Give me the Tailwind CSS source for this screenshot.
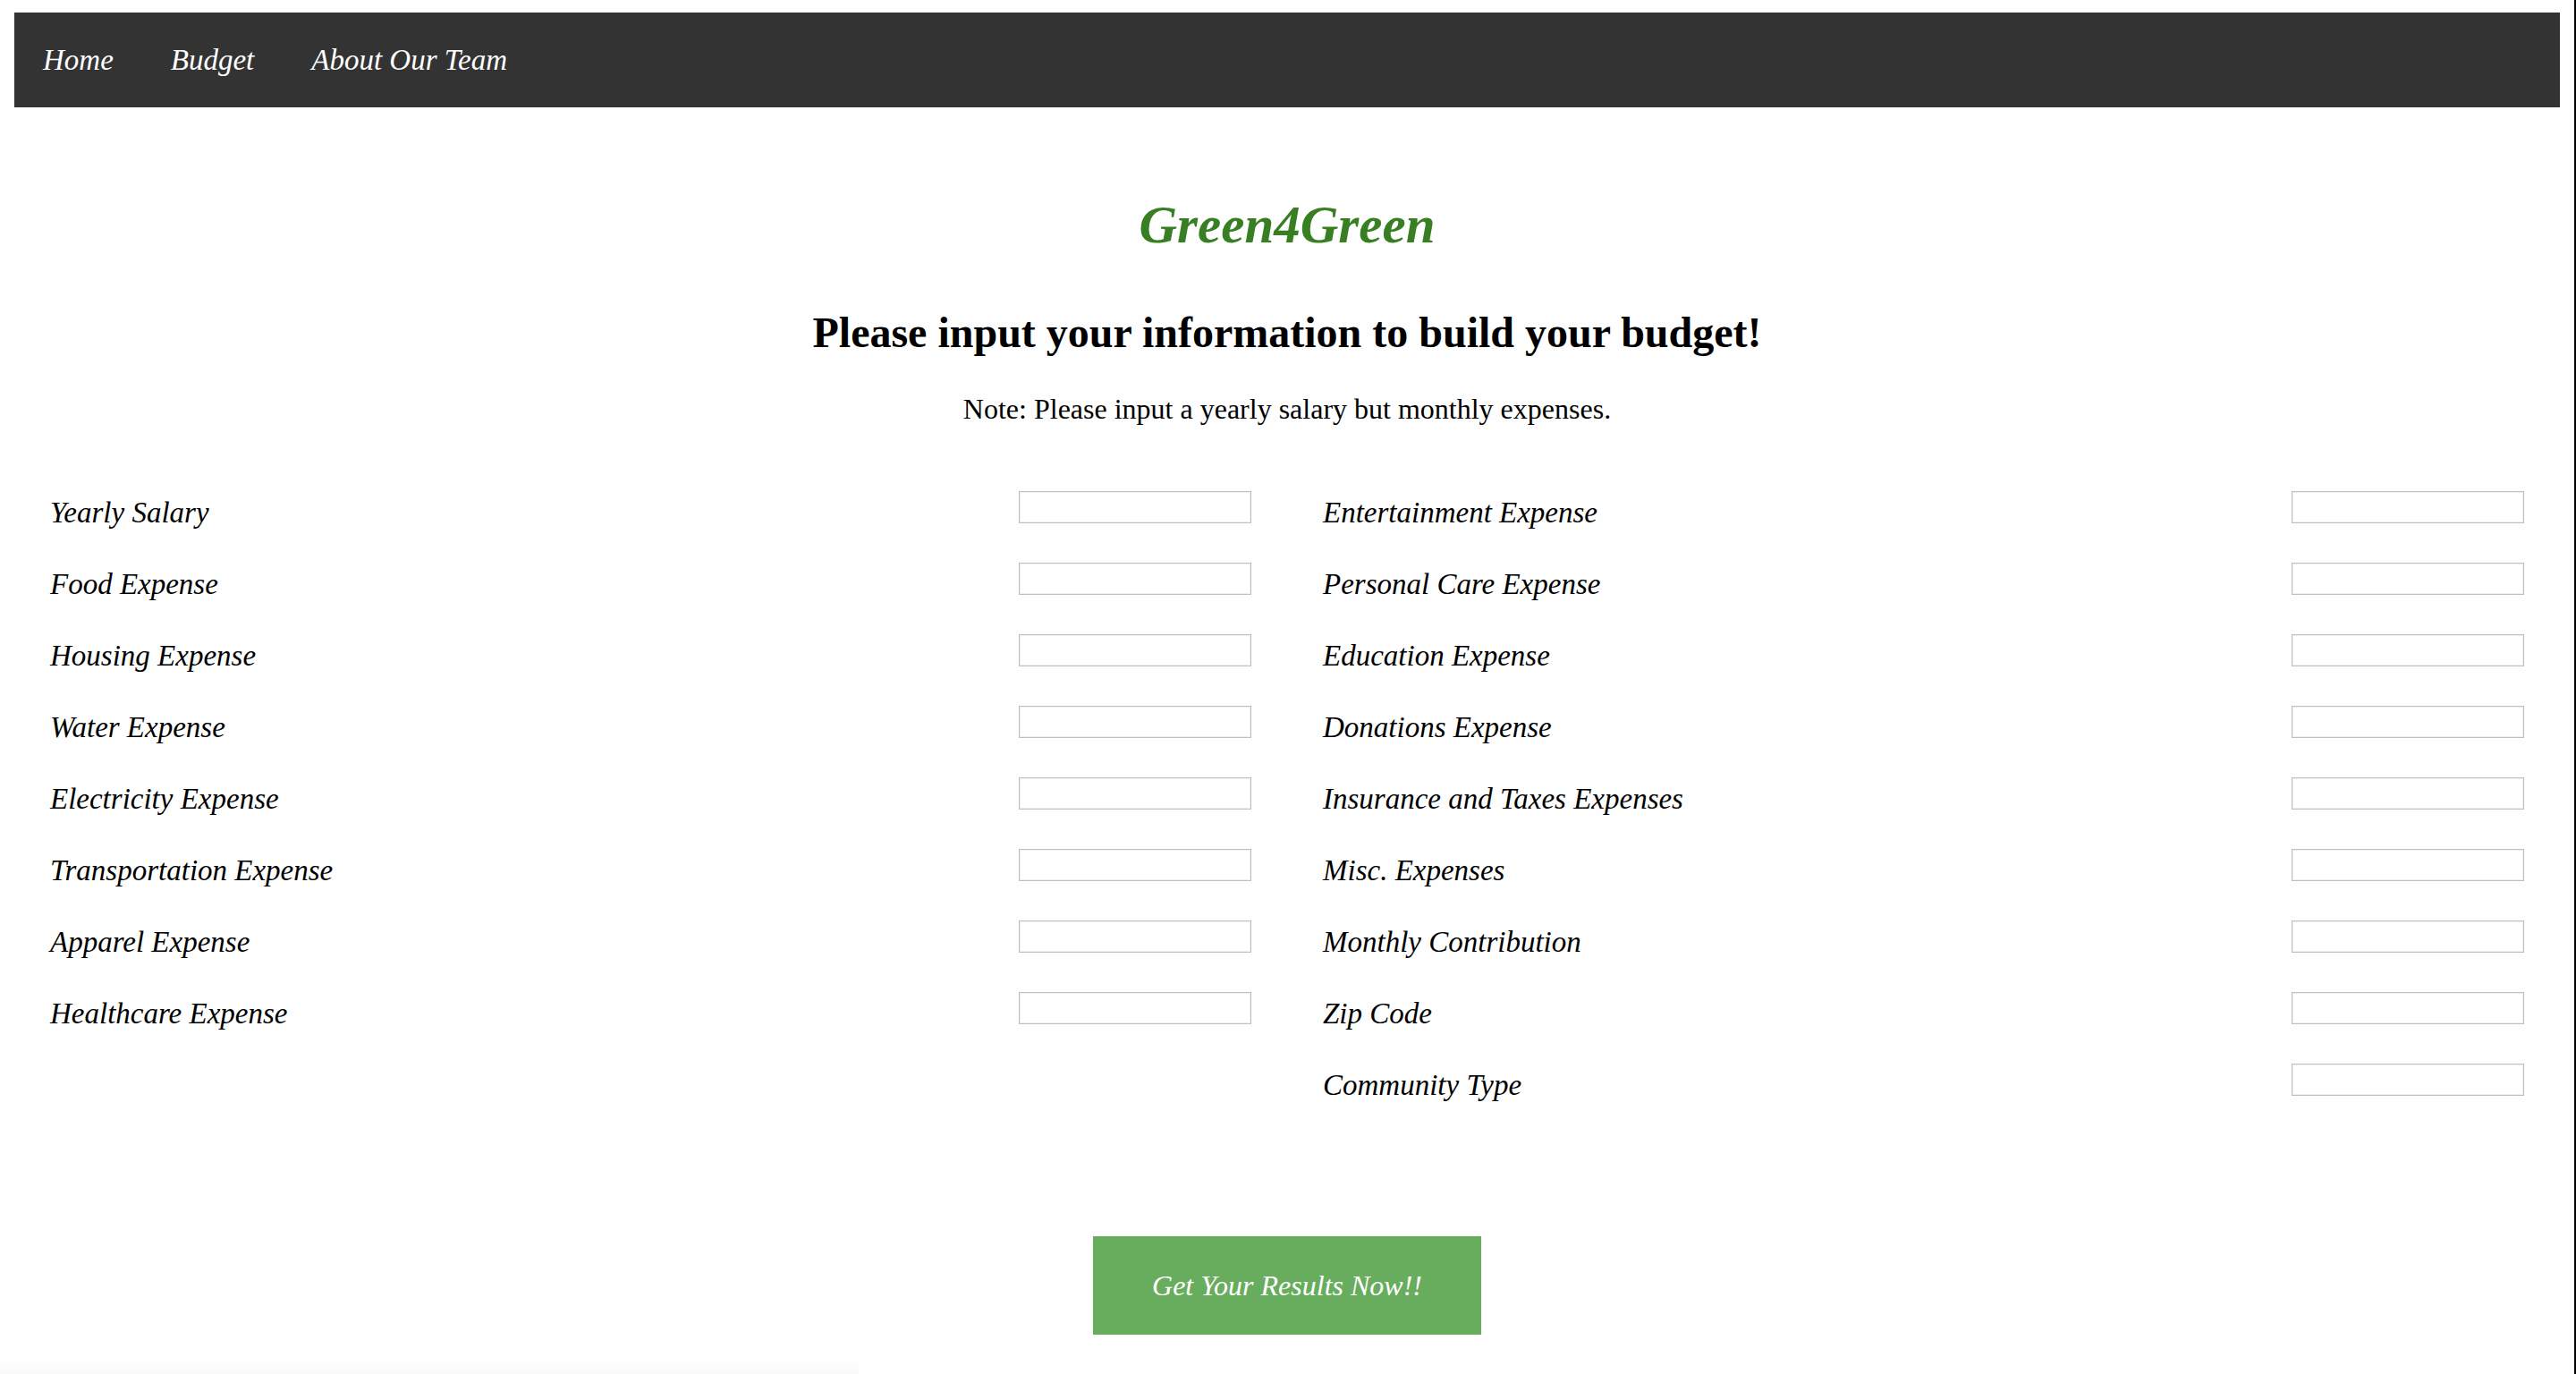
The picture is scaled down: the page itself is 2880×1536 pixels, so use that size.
<!DOCTYPE html>
<html lang="en">
<head>
<meta charset="utf-8">
<meta name="viewport" content="width=device-width, initial-scale=1">
<title>Green4Green</title>
<script src="https://cdn.jsdelivr.net/npm/@tailwindcss/browser@4"></script>
</head>
<body class="min-h-screen border-r-2 border-black bg-[#fefefe] px-4 pt-3.5 pb-10 font-['Liberation_Serif',serif] text-black">
<nav class="flex flex-wrap bg-[#333333] text-[33px] leading-10 text-white italic">
  <a href="#" class="px-8 py-[33px]">Home</a>
  <a href="#" class="px-8 py-[33px]">Budget</a>
  <a href="#" class="px-8 py-[33px]">About Our Team</a>
</nav>
<main class="text-center">
  <h1 class="mt-[99px] text-[59px] leading-16 font-bold text-[#377f22] italic">Green4Green</h1>
  <h2 class="mt-[61px] text-5xl leading-14 font-bold">Please input your information to build your budget!</h2>
  <p class="mt-[39px] text-[32px] leading-9">Note: Please input a yearly salary but monthly expenses.</p>
  <form>
    <div class="mt-[74px] grid grid-cols-2 text-left text-[33px] leading-10 italic">
      <div class="flex flex-col gap-9 px-10">
        <div class="flex items-start justify-between"><label for="salary" class="pt-1">Yearly Salary</label><input id="salary" type="text" class="h-9 w-65 border border-[#bfbfbf] bg-white px-1 text-2xl not-italic inset-ring inset-ring-[#efefef]"></div>
        <div class="flex items-start justify-between"><label for="food" class="pt-1">Food Expense</label><input id="food" type="text" class="h-9 w-65 border border-[#bfbfbf] bg-white px-1 text-2xl not-italic inset-ring inset-ring-[#efefef]"></div>
        <div class="flex items-start justify-between"><label for="housing" class="pt-1">Housing Expense</label><input id="housing" type="text" class="h-9 w-65 border border-[#bfbfbf] bg-white px-1 text-2xl not-italic inset-ring inset-ring-[#efefef]"></div>
        <div class="flex items-start justify-between"><label for="water" class="pt-1">Water Expense</label><input id="water" type="text" class="h-9 w-65 border border-[#bfbfbf] bg-white px-1 text-2xl not-italic inset-ring inset-ring-[#efefef]"></div>
        <div class="flex items-start justify-between"><label for="electricity" class="pt-1">Electricity Expense</label><input id="electricity" type="text" class="h-9 w-65 border border-[#bfbfbf] bg-white px-1 text-2xl not-italic inset-ring inset-ring-[#efefef]"></div>
        <div class="flex items-start justify-between"><label for="transportation" class="pt-1">Transportation Expense</label><input id="transportation" type="text" class="h-9 w-65 border border-[#bfbfbf] bg-white px-1 text-2xl not-italic inset-ring inset-ring-[#efefef]"></div>
        <div class="flex items-start justify-between"><label for="apparel" class="pt-1">Apparel Expense</label><input id="apparel" type="text" class="h-9 w-65 border border-[#bfbfbf] bg-white px-1 text-2xl not-italic inset-ring inset-ring-[#efefef]"></div>
        <div class="flex items-start justify-between"><label for="healthcare" class="pt-1">Healthcare Expense</label><input id="healthcare" type="text" class="h-9 w-65 border border-[#bfbfbf] bg-white px-1 text-2xl not-italic inset-ring inset-ring-[#efefef]"></div>
      </div>
      <div class="flex flex-col gap-9 px-10">
        <div class="flex items-start justify-between"><label for="entertainment" class="pt-1">Entertainment Expense</label><input id="entertainment" type="text" class="h-9 w-65 border border-[#bfbfbf] bg-white px-1 text-2xl not-italic inset-ring inset-ring-[#efefef]"></div>
        <div class="flex items-start justify-between"><label for="care" class="pt-1">Personal Care Expense</label><input id="care" type="text" class="h-9 w-65 border border-[#bfbfbf] bg-white px-1 text-2xl not-italic inset-ring inset-ring-[#efefef]"></div>
        <div class="flex items-start justify-between"><label for="education" class="pt-1">Education Expense</label><input id="education" type="text" class="h-9 w-65 border border-[#bfbfbf] bg-white px-1 text-2xl not-italic inset-ring inset-ring-[#efefef]"></div>
        <div class="flex items-start justify-between"><label for="donations" class="pt-1">Donations Expense</label><input id="donations" type="text" class="h-9 w-65 border border-[#bfbfbf] bg-white px-1 text-2xl not-italic inset-ring inset-ring-[#efefef]"></div>
        <div class="flex items-start justify-between"><label for="insurance" class="pt-1">Insurance and Taxes Expenses</label><input id="insurance" type="text" class="h-9 w-65 border border-[#bfbfbf] bg-white px-1 text-2xl not-italic inset-ring inset-ring-[#efefef]"></div>
        <div class="flex items-start justify-between"><label for="misc" class="pt-1">Misc. Expenses</label><input id="misc" type="text" class="h-9 w-65 border border-[#bfbfbf] bg-white px-1 text-2xl not-italic inset-ring inset-ring-[#efefef]"></div>
        <div class="flex items-start justify-between"><label for="contribution" class="pt-1">Monthly Contribution</label><input id="contribution" type="text" class="h-9 w-65 border border-[#bfbfbf] bg-white px-1 text-2xl not-italic inset-ring inset-ring-[#efefef]"></div>
        <div class="flex items-start justify-between"><label for="zip" class="pt-1">Zip Code</label><input id="zip" type="text" class="h-9 w-65 border border-[#bfbfbf] bg-white px-1 text-2xl not-italic inset-ring inset-ring-[#efefef]"></div>
        <div class="flex items-start justify-between"><label for="community" class="pt-1">Community Type</label><input id="community" type="text" class="h-9 w-65 border border-[#bfbfbf] bg-white px-1 text-2xl not-italic inset-ring inset-ring-[#efefef]"></div>
      </div>
    </div>
    <button type="button" class="mt-[149px] w-[434px] bg-[#68ad5e] py-[35px] text-[32px] leading-10 text-white italic">Get Your Results Now!!</button>
  </form>
</main>
<!-- faint shadow rising from the bottom left edge -->
<div class="pointer-events-none fixed bottom-0 left-0 h-3.5 w-1/3 bg-linear-to-t from-black/2 to-transparent"></div>
</body>
</html>
